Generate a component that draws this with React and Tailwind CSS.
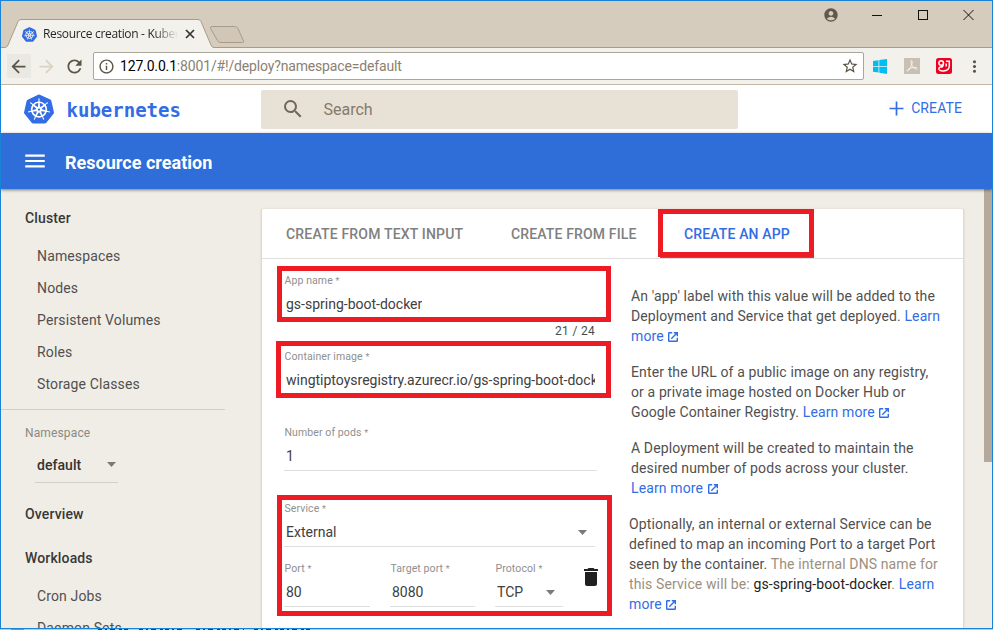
import React from "react";
import { SiKubernetes } from "react-icons/si";
import { MdMenu, MdSearch, MdDelete, MdArrowBack, MdArrowForward, MdRefresh, MdStarBorder, MdMoreVert, MdInfoOutline, MdAccountCircle } from "react-icons/md";

function TitleBar() {
  return (
    <div className="relative h-[46px] shrink-0 bg-[#d6ccbd]">
      <svg className="absolute left-0 top-0" width="260" height="47" viewBox="1 1 260 47">
        <path d="M1 47.500 H4.500 Q7 47.500 8 45 L18 21.500 Q19 19.500 21 19.500 H198 Q200 19.500 201 21.500 L211 45 Q212 47.500 214 47.500 V49 H1Z" fill="#f2f1ec" stroke="#a99b88" strokeWidth="1" />
        <path d="M212 26.500 H234.500 Q237 26.500 238 28.500 L243.500 41 Q244 42.500 242.500 42.500 H221 Q218.500 42.500 217.500 40.500 L210.500 28.500 Q210 26.500 212 26.500Z" fill="#d1c7b8" stroke="#a99b88" strokeWidth="1" />
      </svg>
      <div className="relative flex h-full items-start pl-[21px] pt-[24px]">
        <SiKubernetes className="mt-[2px] size-[15px] text-[#326ce5]" />
        <span className="ml-1.5 w-[135px] overflow-hidden whitespace-nowrap bg-gradient-to-r from-[#222] from-82% to-transparent bg-clip-text font-['Open_Sans',sans-serif] text-[12px] leading-[18px] tracking-[-0.33px] text-transparent">Resource creation - Kubernetes</span>
        <svg className="ml-[7px] mt-[4px]" width="10" height="10" viewBox="0 0 10 10"><path d="M1 1 L9 9 M9 1 L1 9" stroke="#333" strokeWidth="1.700" /></svg>
      </div>
      <MdAccountCircle className="absolute left-[822px] top-[6px] size-[16px] text-[#5f594d]" />
      <svg className="absolute left-[870px] top-[8px]" width="104" height="12" viewBox="0 0 104 12" fill="none" stroke="#111">
        <path d="M1 6.500 H11" />
        <rect x="47.500" y="1.500" width="9" height="9" />
        <path d="M92.500 1 L102.500 11 M102.500 1 L92.500 11" />
      </svg>
    </div>
  );
}

function Toolbar() {
  return (
    <div className="flex h-[38px] shrink-0 items-center border-b border-t border-b-[#c4b7a7] border-t-[#a99b88] bg-[#f2f1ec] pl-[6px]">
      <div className="flex size-6 items-center justify-center bg-[#eae8e2]"><MdArrowBack className="mr-px size-[21px] text-[#5a5346]" /></div>
      <div className="ml-1 flex size-6 items-center justify-center"><MdArrowForward className="mr-px size-[21px] text-[#d9d2c5]" /></div>
      <div className="ml-1 flex size-6 items-center justify-center"><MdRefresh className="mr-px size-[21px] text-[#5a5346]" /></div>
      <div className="ml-[6px] flex h-7 w-[771px] items-center rounded-[2px] border border-[#aaa69c] bg-white pl-1 pr-1">
        <MdInfoOutline className="size-[17px] text-[#5a5346]" />
        <span className="ml-[5px] text-[14px] tracking-[-0.16px] text-[#8a8172]"><span className="text-black">127.0.0.1</span>:8001/#!/deploy?namespace=default</span>
        <MdStarBorder className="ml-auto size-[18px] text-[#5a5346]" />
      </div>
      <svg className="ml-[9px]" width="14" height="15" viewBox="0 0 14 15" fill="#00bdf2"><path d="M0 2 L5.500 1.200 V7 H0Z M6.300 1.100 L14 0 V7 H6.300Z M0 7.800 H5.500 V13.600 L0 12.800Z M6.300 7.800 H14 V15 L6.300 13.800Z" /></svg>
      <svg className="ml-[17px]" width="16" height="16" viewBox="0 0 16 16"><rect width="16" height="16" fill="#c9bfb2" /><path d="M7.500 2.500 C6.500 2.500 7 5 8 7.500 C9.500 10.500 12 11.500 13 10.500 C13.500 9 9 9 6 10.300 C3.500 11.500 2.500 13 3.500 13 C5 13 8.500 6.500 8.200 3.500 Q8 2.500 7.500 2.500Z" fill="none" stroke="#f7f4ef" strokeWidth="1" /></svg>
      <svg className="ml-4" width="16" height="16" viewBox="0 0 16 16"><rect width="16" height="16" rx="2.500" fill="#f0001e" /><circle cx="5.200" cy="5" r="2.300" fill="none" stroke="#fff" strokeWidth="1.500" /><path d="M7 6.500 Q7.500 9 4.500 9 Q2.500 9.500 3 11.500 Q4 13.300 7.500 13 Q13.300 12.500 13.300 8 V3.300 H10 M10.200 5.500 V8.500" fill="none" stroke="#fff" strokeWidth="1.500" /></svg>
      <MdMoreVert className="ml-[13px] size-[19px] text-[#5a5346]" />
    </div>
  );
}

function Header() {
  return (
    <div className="flex h-12 shrink-0 items-center bg-white">
      <SiKubernetes className="ml-[23px] size-[30px] text-[#326de6]" />
      <span className="ml-[12.5px] w-[194.5px] pt-px font-['DejaVu_Sans_Mono',monospace] text-[19px] font-bold leading-6 text-[#326de6]">kubernetes</span>
      <div className="flex h-[39px] w-[477px] items-center rounded-[2px] bg-[#e8e1d5] pl-5">
        <MdSearch className="size-6 text-[#6f675b]" />
        <span className="ml-[18.5px] pt-0.5 text-[16px] text-[#857a6b]">Search</span>
      </div>
      <div className="ml-auto mr-[30px] flex items-center text-[14px] tracking-[0.1px] text-[#326de6]">
        <svg className="-mt-px mr-[7px]" width="15" height="15" viewBox="0 0 15 15"><path d="M0.500 7.500 H14.500 M7.500 0.500 V14.500" stroke="#326de6" strokeWidth="1.700" /></svg>
        <span className="-mt-0.5">CREATE</span>
      </div>
    </div>
  );
}

const clusterItems = ["Namespaces", "Nodes", "Persistent Volumes", "Roles", "Storage Classes"];

function NavGroup({ children }) {
  return <div className="flex h-11 items-center pl-6 font-medium text-[#383838]">{children}</div>;
}
function NavItem({ children }) {
  return <div className="flex h-8 items-center pl-9 text-[#505050]">{children}</div>;
}
function Caret({ className }) {
  return <svg className={"shrink-0 " + className} width="9" height="5" viewBox="0 0 9 5"><path d="M0 0 H9 L4.500 5Z" fill="#7c7a76" /></svg>;
}

function Sidebar() {
  return (
    <nav className="w-[260px] shrink-0 pt-[7px] text-[14px] tracking-[0.14px]">
      <NavGroup>Cluster</NavGroup>
      {clusterItems.map((item) => <NavItem key={item}>{item}</NavItem>)}
      <div className="mt-[9px] w-[224px] border-t border-[#d2cfc8]" />
      <div className="mt-[13px] pl-6 text-[12px] leading-5 text-[#8b8984]">Namespace</div>
      <div className="ml-[34px] mt-1 flex h-9 w-[83px] items-center justify-between border-b border-[#d2cfc8] pl-0.5 font-medium text-[#333]">
        <span className="pt-px tracking-[0.05px]">default</span><Caret className="mr-[2px]" />
      </div>
      <div className="h-[9px]" />
      <NavGroup>Overview</NavGroup>
      <NavGroup>Workloads</NavGroup>
      <NavItem>Cron Jobs</NavItem>
      <NavItem>Daemon Sets</NavItem>
    </nav>
  );
}

function Field({ label, value, width, line = true, select, clip = "" }) {
  return (
    <div className={"flex flex-col " + width}>
      <div className="h-5 pl-[0.5px] pt-px text-[10.5px] leading-5 tracking-[0.1px] text-[#8f8f8f]">{label} <span className="text-[9px]">*</span></div>
      <div className={"flex h-[29px] items-center justify-between border-b pl-0.5 text-[14px] text-[#404040] " + (line ? "border-[#dedede]" : "border-transparent")}>
        <span className={"overflow-hidden whitespace-nowrap " + clip}>{value}</span>
        {select && <Caret className="mr-2" />}
      </div>
    </div>
  );
}

function LearnMore() {
  return (
    <span className="text-[#326de6]">
      Learn more{" "}
      <svg className="ml-px inline align-[-1px]" width="10" height="10" viewBox="0 0 10 10" fill="none" stroke="currentColor" strokeWidth="1.400">
        <path d="M4.200 0.700 H1.200 Q0.700 0.700 0.700 1.200 V8.800 Q0.700 9.300 1.200 9.300 H8.800 Q9.300 9.300 9.300 8.800 V5.800" />
        <path d="M5.800 0.700 H9.300 V4.200 M9.200 0.800 L3.300 6.700" />
      </svg>
    </span>
  );
}

function Help({ children }) {
  return <p className="w-[312px] pt-4 text-[14px] leading-5 tracking-[0.12px] text-[#505050]">{children}</p>;
}

function Card() {
  return (
    <main className="mt-5 flex w-[703px] shrink-0 flex-col rounded-t-[2px] border-x border-[#e2d9cc] bg-white shadow-[0_0_2px_#d9cdbb]">
      <div className="flex h-[50px] shrink-0 items-center border-b border-[#dedede] text-[14px] font-medium text-[#808080]">
        <div className="flex h-[49px] w-[225px] items-center pl-6 pt-px tracking-[0.18px]">CREATE FROM TEXT INPUT</div>
        <div className="flex h-[49px] w-[173px] items-center pl-6 pt-px tracking-[0.14px]">CREATE FROM FILE</div>
        <div className="flex h-[49px] w-[154px] items-center border-b border-[#326de6] pl-6 pt-0.5 tracking-[0.14px] text-[#326de6]">CREATE AN APP</div>
      </div>
      <div className="ml-[22px] mt-[11px] grid grid-cols-[347px_324px] grid-rows-[76px_76px_76px_130px]">
        <div className="w-[313px]">
          <Field label="App name" value="gs-spring-boot-docker" width="w-full" line={false} />
          <div className="pr-[2px] pt-[2px] text-right text-[12px] leading-5 tracking-[0.3px] text-[#4c4c4c]">21 / 24</div>
        </div>
        <Help>An 'app' label with this value will be added to the Deployment and Service that get deployed. <LearnMore /></Help>
        <Field label="Container image" value="wingtiptoysregistry.azurecr.io/gs-spring-boot-docker" width="w-[313px]" line={false} clip="w-[309px]" />
        <Help>Enter the URL of a public image on any registry, or a private image hosted on Docker Hub or Google Container Registry. <LearnMore /></Help>
        <Field label="Number of pods" value="1" width="w-[313px]" />
        <Help>A Deployment will be created to maintain the desired number of pods across your cluster. <LearnMore /></Help>
        <div>
          <Field label="Service" value="External" width="w-[311px]" select />
          <div className="mt-[11px] flex">
            <Field label="Port" value="80" width="w-[86px]" />
            <Field label="Target port" value="8080" width="ml-5 w-[85px]" />
            <Field label="Protocol" value="TCP" width="ml-5 w-[68px]" select />
            <MdDelete className="ml-4 mt-[7px] size-6 text-[#212121]" />
          </div>
        </div>
        <div className="-ml-0.5"><Help>Optionally, an internal or external Service can be defined to map an incoming Port to a target Port seen by the container. <span className="text-[#9c8f7e]">The internal DNS name for this Service will be: <span className="text-[#222]">gs-spring-boot-docker</span>.</span> <LearnMore /></Help></div>
      </div>
    </main>
  );
}

export default function App() {
  return (
    <div className="relative h-[630px] w-[993px] overflow-hidden bg-[#c9c9c9] font-['Roboto',sans-serif]">
      <div className="flex h-[629px] w-full flex-col overflow-hidden border border-[#1883d7] bg-[#f0ede6]">
        <TitleBar />
        <Toolbar />
        <Header />
        <div className="z-10 flex h-14 shrink-0 items-center bg-[#2f6dd8] pl-[21px] text-white shadow-[0_1px_3px_rgba(0,0,0,0.5)]">
          <MdMenu className="size-[26px]" />
          <h1 className="ml-[17px] pt-0.5 text-[18px] font-bold tracking-[0.02px]">Resource creation</h1>
        </div>
        <div className="flex min-h-0 flex-1">
          <Sidebar />
          <Card />
          <div className="ml-auto h-[273px] w-2 shrink-0 bg-[#b5a99b]" />
        </div>
      </div>
      <svg className="absolute left-0 top-[629px]" width="340" height="1" viewBox="0 0 340 1">
        <path d="M11 0.500 H24" stroke="#8f8f8f" />
        <path d="M98 0.500 H130 M139 0.500 H186 M196 0.500 H244 M254 0.500 H310" stroke="#3a3a3a" strokeDasharray="4 3 2 3 5 4 3 2" />
      </svg>
      <div className="absolute left-[658px] top-[209px] h-12 w-[156px] border-5 border-[#ed1c24]" />
      <div className="absolute left-[277px] top-[266px] h-14 w-[334px] border-5 border-[#ed1c24]" />
      <div className="absolute left-[276px] top-[341px] h-[57px] w-[335px] border-5 border-[#ed1c24]" />
      <div className="absolute left-[277px] top-[495px] h-[121px] w-[335px] border-5 border-[#ed1c24]" />
    </div>
  );
}
